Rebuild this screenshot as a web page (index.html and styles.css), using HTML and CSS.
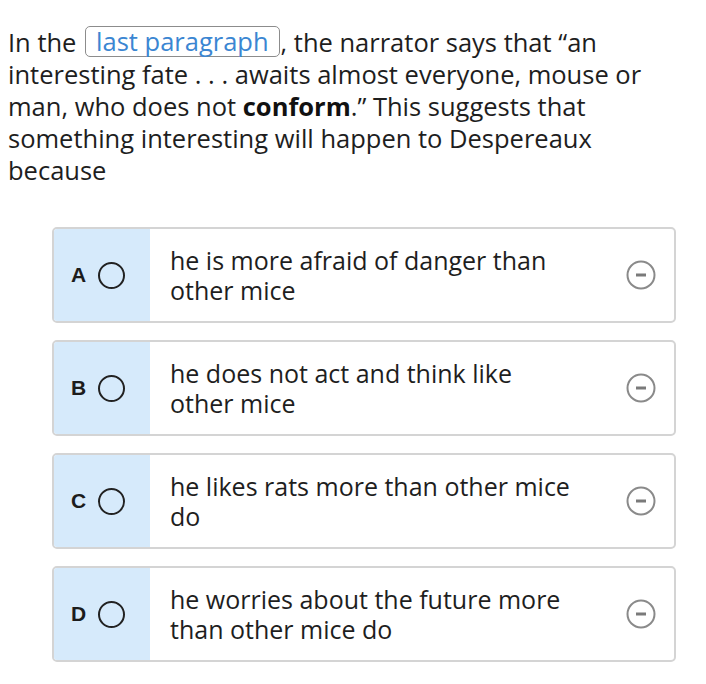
FILE: index.html
```html
<!DOCTYPE html>
<html lang="en">
<head>
<meta charset="utf-8">
<title>Question</title>
<link rel="stylesheet" href="styles.css">
</head>
<body>
<div class="page">
  <p class="question">In the <span class="ref">last paragraph</span>, the narrator says that “an interesting fate . . . awaits almost everyone, mouse or man, who does not <b>conform</b>.” This suggests that something interesting will happen to Despereaux because</p>
  <div class="options">
    <div class="option">
      <div class="choice"><span class="letter">A</span><span class="radio"></span></div>
      <div class="text">he is more afraid of danger than other mice</div>
      <div class="elim"><svg width="30" height="30" viewBox="0 0 30 30"><circle cx="15" cy="15" r="13.5" fill="none" stroke="#8a8a8a" stroke-width="2"/><line x1="10" y1="15" x2="20" y2="15" stroke="#7a7a7a" stroke-width="3"/></svg></div>
    </div>
    <div class="option">
      <div class="choice"><span class="letter">B</span><span class="radio"></span></div>
      <div class="text">he does not act and think like other mice</div>
      <div class="elim"><svg width="30" height="30" viewBox="0 0 30 30"><circle cx="15" cy="15" r="13.5" fill="none" stroke="#8a8a8a" stroke-width="2"/><line x1="10" y1="15" x2="20" y2="15" stroke="#7a7a7a" stroke-width="3"/></svg></div>
    </div>
    <div class="option">
      <div class="choice"><span class="letter">C</span><span class="radio"></span></div>
      <div class="text">he likes rats more than other mice do</div>
      <div class="elim"><svg width="30" height="30" viewBox="0 0 30 30"><circle cx="15" cy="15" r="13.5" fill="none" stroke="#8a8a8a" stroke-width="2"/><line x1="10" y1="15" x2="20" y2="15" stroke="#7a7a7a" stroke-width="3"/></svg></div>
    </div>
    <div class="option">
      <div class="choice"><span class="letter">D</span><span class="radio"></span></div>
      <div class="text">he worries about the future more than other mice do</div>
      <div class="elim"><svg width="30" height="30" viewBox="0 0 30 30"><circle cx="15" cy="15" r="13.5" fill="none" stroke="#8a8a8a" stroke-width="2"/><line x1="10" y1="15" x2="20" y2="15" stroke="#7a7a7a" stroke-width="3"/></svg></div>
    </div>
  </div>
</div>
</body>
</html>
```

FILE: styles.css
```css
html, body {
  margin: 0;
  padding: 0;
  background: #ffffff;
}

.page {
  padding: 26px 30px 0 8px;
  font-family: "Open Sans", "DejaVu Sans", sans-serif;
  color: #1e1e1e;
}

.question {
  margin: 0;
  font-size: 25.5px;
  line-height: 32px;
}

.question b {
  font-weight: 700;
  color: #111111;
}

.ref {
  display: inline-block;
  border: 1.5px solid #8c8c8c;
  border-radius: 5px;
  padding: 0 10px 0 10px;
  margin: 0 1px 0 2px;
  line-height: 29px;
  vertical-align: 1px;
  color: #3b86d2;
}

.options {
  margin: 41px 0 0 44px;
  display: flex;
  flex-direction: column;
  gap: 17px;
}

.option {
  display: flex;
  height: 96px;
  box-sizing: border-box;
  border: 2px solid #d4d4d4;
  border-radius: 5px;
  overflow: hidden;
}

.choice {
  width: 96px;
  flex: none;
  background: #d6eafb;
  display: flex;
  align-items: center;
  padding-left: 16px;
  box-sizing: border-box;
  gap: 11px;
}

.letter {
  font-family: "Liberation Sans", Arial, sans-serif;
  font-weight: 700;
  font-size: 21px;
  color: #1c1c1c;
  width: 17px;
  text-align: center;
}

.radio {
  width: 23px;
  height: 23px;
  border: 2.5px solid #222222;
  border-radius: 50%;
}

.text {
  flex: none;
  width: 403px;
  padding-left: 20px;
  display: flex;
  align-items: center;
  font-size: 25px;
  line-height: 30px;
  color: #1e1e1e;
}

.elim {
  flex: 1;
  display: flex;
  align-items: center;
  justify-content: flex-end;
  padding-right: 18px;
}

.elim svg {
  display: block;
}
```
